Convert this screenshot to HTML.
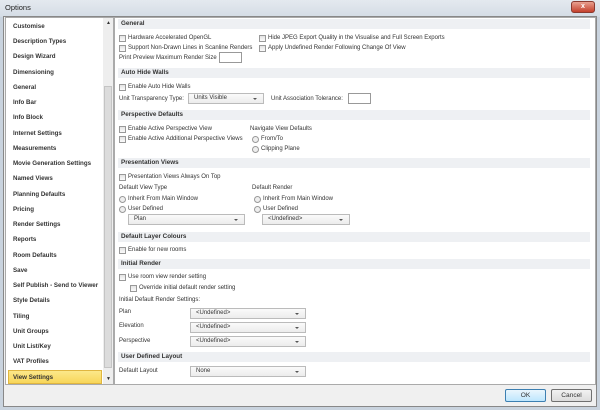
<!DOCTYPE html><html><head><style>
*{box-sizing:border-box;margin:0;padding:0}
body{width:600px;height:410px;position:relative;overflow:hidden;background:#c9d3de;font-family:"Liberation Sans",sans-serif;font-size:6px;color:#333}
.a{position:absolute;white-space:nowrap}
.cb{position:absolute;width:7px;height:7px;border:1px solid #999;background:linear-gradient(#e4e4e4,#fafafa)}
.rb{position:absolute;width:7px;height:7px;border:1px solid #999;border-radius:50%;background:#eee}
.hd{position:absolute;left:118px;width:472px;height:10px;background:#eef0f3;font-weight:bold;font-size:6.3px;padding-left:3px;line-height:10px;color:#333}
.sel{position:absolute;height:11px;border:1px solid #bbb;background:linear-gradient(#fafafa,#ececec);padding-left:5px;line-height:9px;font-size:6px}
.sel:after{content:"";position:absolute;right:6px;top:4px;border:2px solid transparent;border-top:2.5px solid #555}
.in{position:absolute;height:11px;border:1px solid #999;background:#fff}
.li{position:absolute;left:13px;font-weight:bold;font-size:6.2px;color:#333}
</style></head><body>
<div class="a" style="left:0;top:0;width:600px;height:17px;background:linear-gradient(#e4e9ef,#d4dce5)"></div>
<div class="a" style="left:5px;top:3px;font-size:7.5px;color:#222">Options</div>
<div class="a" style="left:571px;top:1px;width:24px;height:12px;background:linear-gradient(#e8a090,#c4402c);border:1px solid #8a3a30;border-radius:3px;color:#fff;font-size:7px;text-align:center;line-height:10px;font-weight:bold">x</div>
<div class="a" style="left:3px;top:16px;width:594px;height:391px;background:#f0f0f0;border:1px solid #888"></div>
<div class="a" style="left:5px;top:17px;width:109px;height:368px;background:#fff;border:1px solid #aaa"></div>
<div class="a" style="left:103px;top:18px;width:10px;height:366px;background:#eee"></div>
<div class="a" style="left:104px;top:86px;width:8px;height:282px;background:#dcdcdc;border:1px solid #c4c4c4"></div>
<div class="a" style="left:106px;top:20px;font-size:5px">▲</div>
<div class="a" style="left:106px;top:376px;font-size:5px">▼</div>
<div class="a" style="left:8px;top:370px;width:94px;height:14px;background:linear-gradient(#fce88a,#f8d65a);border:1px solid #e0b640"></div>
<div class="li" style="top:23px">Customise</div>
<div class="li" style="top:38px">Description Types</div>
<div class="li" style="top:53px">Design Wizard</div>
<div class="li" style="top:69px">Dimensioning</div>
<div class="li" style="top:84px">General</div>
<div class="li" style="top:99px">Info Bar</div>
<div class="li" style="top:114px">Info Block</div>
<div class="li" style="top:130px">Internet Settings</div>
<div class="li" style="top:145px">Measurements</div>
<div class="li" style="top:160px">Movie Generation Settings</div>
<div class="li" style="top:175px">Named Views</div>
<div class="li" style="top:191px">Planning Defaults</div>
<div class="li" style="top:206px">Pricing</div>
<div class="li" style="top:221px">Render Settings</div>
<div class="li" style="top:236px">Reports</div>
<div class="li" style="top:252px">Room Defaults</div>
<div class="li" style="top:267px">Save</div>
<div class="li" style="top:282px">Self Publish - Send to Viewer</div>
<div class="li" style="top:297px">Style Details</div>
<div class="li" style="top:313px">Tiling</div>
<div class="li" style="top:328px">Unit Groups</div>
<div class="li" style="top:343px">Unit List/Key</div>
<div class="li" style="top:358px">VAT Profiles</div>
<div class="li" style="top:374px">View Settings</div>
<div class="a" style="left:114px;top:17px;width:482px;height:368px;background:#fff;border:1px solid #aaa"></div>
<div class="hd" style="top:19px">General</div>
<div class="cb" style="left:119px;top:35px"></div><div class="a" style="left:128px;top:35px">Hardware Accelerated OpenGL</div>
<div class="cb" style="left:119px;top:45px"></div><div class="a" style="left:128px;top:45px">Support Non-Drawn Lines in Scanline Renders</div>
<div class="a" style="left:119px;top:55px">Print Preview Maximum Render Size</div><div class="in" style="left:219px;top:52px;width:23px"></div>
<div class="cb" style="left:259px;top:35px"></div><div class="a" style="left:268px;top:35px">Hide JPEG Export Quality in the Visualise and Full Screen Exports</div>
<div class="cb" style="left:259px;top:45px"></div><div class="a" style="left:268px;top:45px">Apply Undefined Render Following Change Of View</div>
<div class="hd" style="top:68px">Auto Hide Walls</div>
<div class="cb" style="left:119px;top:84px"></div><div class="a" style="left:128px;top:84px">Enable Auto Hide Walls</div>
<div class="a" style="left:119px;top:96px">Unit Transparency Type:</div><div class="sel" style="left:188px;top:93px;width:76px">Units Visible</div>
<div class="a" style="left:271px;top:96px">Unit Association Tolerance:</div><div class="in" style="left:348px;top:93px;width:23px"></div>
<div class="hd" style="top:110px">Perspective Defaults</div>
<div class="cb" style="left:119px;top:126px"></div><div class="a" style="left:128px;top:126px">Enable Active Perspective View</div>
<div class="cb" style="left:119px;top:136px"></div><div class="a" style="left:128px;top:136px">Enable Active Additional Perspective Views</div>
<div class="a" style="left:250px;top:126px">Navigate View Defaults</div>
<div class="rb" style="left:252px;top:136px"></div><div class="a" style="left:261px;top:136px">From/To</div>
<div class="rb" style="left:252px;top:146px"></div><div class="a" style="left:261px;top:146px">Clipping Plane</div>
<div class="hd" style="top:158px">Presentation Views</div>
<div class="cb" style="left:119px;top:174px"></div><div class="a" style="left:128px;top:174px">Presentation Views Always On Top</div>
<div class="a" style="left:119px;top:185px">Default View Type</div>
<div class="rb" style="left:119px;top:196px"></div><div class="a" style="left:128px;top:196px">Inherit From Main Window</div>
<div class="rb" style="left:119px;top:206px"></div><div class="a" style="left:128px;top:206px">User Defined</div>
<div class="sel" style="left:128px;top:214px;width:117px">Plan</div>
<div class="a" style="left:252px;top:185px">Default Render</div>
<div class="rb" style="left:254px;top:196px"></div><div class="a" style="left:263px;top:196px">Inherit From Main Window</div>
<div class="rb" style="left:254px;top:206px"></div><div class="a" style="left:263px;top:206px">User Defined</div>
<div class="sel" style="left:262px;top:214px;width:88px">&lt;Undefined&gt;</div>
<div class="hd" style="top:232px">Default Layer Colours</div>
<div class="cb" style="left:119px;top:247px"></div><div class="a" style="left:128px;top:247px">Enable for new rooms</div>
<div class="hd" style="top:259px">Initial Render</div>
<div class="cb" style="left:119px;top:274px"></div><div class="a" style="left:128px;top:274px">Use room view render setting</div>
<div class="cb" style="left:130px;top:285px"></div><div class="a" style="left:139px;top:285px">Override initial default render setting</div>
<div class="a" style="left:119px;top:297px">Initial Default Render Settings:</div>
<div class="a" style="left:119px;top:309px">Plan</div><div class="sel" style="left:190px;top:308px;width:116px">&lt;Undefined&gt;</div>
<div class="a" style="left:119px;top:323px">Elevation</div><div class="sel" style="left:190px;top:322px;width:116px">&lt;Undefined&gt;</div>
<div class="a" style="left:119px;top:338px">Perspective</div><div class="sel" style="left:190px;top:336px;width:116px">&lt;Undefined&gt;</div>
<div class="hd" style="top:352px">User Defined Layout</div>
<div class="a" style="left:119px;top:368px">Default Layout</div><div class="sel" style="left:190px;top:366px;width:116px">None</div>
<div class="a" style="left:505px;top:389px;width:41px;height:13px;border:1px solid #3c7fb1;border-radius:2px;background:linear-gradient(#eaf6fd,#bee6fd);text-align:center;line-height:11px;font-size:6.6px">OK</div>
<div class="a" style="left:551px;top:389px;width:41px;height:13px;border:1px solid #707070;border-radius:2px;background:linear-gradient(#f2f2f2,#dcdcdc);text-align:center;line-height:11px;font-size:6.6px">Cancel</div>
</body></html>
